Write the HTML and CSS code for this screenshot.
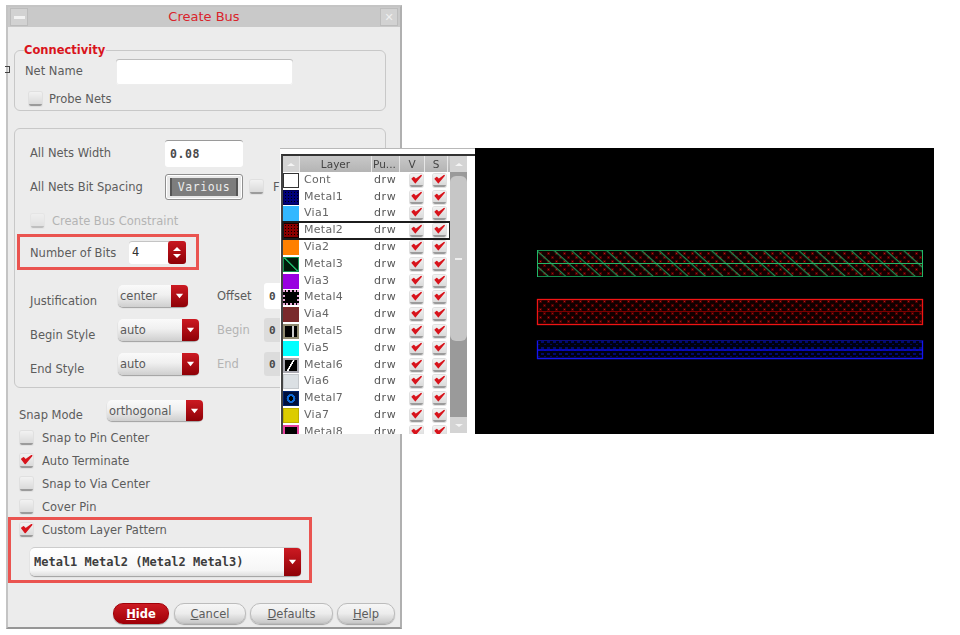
FILE: index.html
```html
<!DOCTYPE html>
<html lang="en">
<head>
<meta charset="utf-8">
<title>Create Bus</title>
<link rel="stylesheet" href="styles.css">
</head>
<body>
<svg class="defs" width="0" height="0" aria-hidden="true">
  <symbol id="tick" viewBox="0 0 14 14"><path d="M1.5 6 L5.5 11 L13 2 L6 7 L3.5 4.5 Z" fill="#d8141c" stroke="#d8141c" stroke-width="1.8" stroke-linejoin="round"/></symbol>
  <symbol id="down" viewBox="0 0 10 6"><path d="M1 0.5 H9 L5 5.5 Z" fill="#fff"/></symbol>
</svg>
<main class="stage">
  <section class="dialog">
    <header class="titlebar">
      <span class="tb-btn tb-menu"><i></i></span>
      <h1 class="title">Create Bus</h1>
      <span class="tb-btn tb-close">✕</span>
    </header>

    <div class="group group-conn">
      <div class="legend">Connectivity</div>
      <div class="row row-net">
        <label class="lbl lbl-net">Net Name</label>
        <span class="input input-net"></span>
      </div>
      <div class="row row-probe">
        <span class="cb"></span><span class="lbl">Probe Nets</span>
      </div>
    </div>

    <div class="group group-main">
      <div class="row row-width">
        <label class="lbl lbl-135 raised">All Nets Width</label>
        <span class="input input-78 mono">0.08</span>
      </div>
      <div class="row row-spacing">
        <label class="lbl lbl-135">All Nets Bit Spacing</label>
        <span class="input input-78 various"><b class="mono">Various</b></span>
        <span class="cb cb-spacing"></span><span class="lbl">F</span>
      </div>
      <div class="row row-constraint">
        <span class="cb cb-disabled"></span><span class="lbl disabled">Create Bus Constraint</span>
      </div>
      <div class="highlight bits">
        <label class="lbl lbl-bits">Number of Bits</label>
        <span class="input spin"><span class="spin-val mono">4</span><span class="spin-btn"><i class="up"></i><i class="dn"></i></span></span>
      </div>
      <div class="row row-just">
        <label class="lbl lbl-88 low">Justification</label>
        <span class="select sel-70"><span>center</span><span class="arrow"><svg><use href="#down"/></svg></span></span>
        <span class="lbl side side-offset">Offset</span>
        <span class="input small mono">0</span>
      </div>
      <div class="row row-style">
        <label class="lbl lbl-88 low">Begin Style</label>
        <span class="select sel-81"><span>auto</span><span class="arrow"><svg><use href="#down"/></svg></span></span>
        <span class="lbl side side-style disabled">Begin</span>
        <span class="input small off mono">0</span>
      </div>
      <div class="row row-style">
        <label class="lbl lbl-88 low">End Style</label>
        <span class="select sel-81"><span>auto</span><span class="arrow"><svg><use href="#down"/></svg></span></span>
        <span class="lbl side side-style disabled">End</span>
        <span class="input small off mono">0</span>
      </div>
    </div>

    <div class="row row-snap">
      <label class="lbl lbl-88 snap-lbl">Snap Mode</label>
      <span class="select sel-96"><span>orthogonal</span><span class="arrow"><svg><use href="#down"/></svg></span></span>
    </div>
    <div class="checks">
      <div class="check"><span class="cb"></span><span class="lbl">Snap to Pin Center</span></div>
      <div class="check"><span class="cb"><svg><use href="#tick"/></svg></span><span class="lbl">Auto Terminate</span></div>
      <div class="check"><span class="cb"></span><span class="lbl">Snap to Via Center</span></div>
      <div class="check"><span class="cb"></span><span class="lbl">Cover Pin</span></div>
    </div>
    <div class="highlight pattern">
      <div class="check"><span class="cb"><svg><use href="#tick"/></svg></span><span class="lbl">Custom Layer Pattern</span></div>
      <span class="select sel-pattern"><span class="mono dark">Metal1 Metal2 (Metal2 Metal3)</span><span class="arrow"><svg><use href="#down"/></svg></span></span>
    </div>
    <footer class="buttons">
      <button class="btn btn-hide"><u>H</u>ide</button>
      <button class="btn btn-cancel"><u>C</u>ancel</button>
      <button class="btn btn-defaults"><u>D</u>efaults</button>
      <button class="btn btn-help"><u>H</u>elp</button>
    </footer>
  </section>

  <span class="stray"></span>

  <section class="layers">
    <div class="layers-inner">
      <div class="table">
        <div class="thead">
          <span class="th th-corner"><i></i></span>
          <span class="th th-layer">Layer</span>
          <span class="th th-pu">Pu...</span>
          <span class="th th-v">V</span>
          <span class="th th-s">S</span>
        </div>
        <div class="tr"><span class="sw sw-cont"></span><span class="name">Cont</span><span class="pu">drw</span><span class="cb"><svg><use href="#tick"/></svg></span><span class="cb"><svg><use href="#tick"/></svg></span></div>
        <div class="tr"><span class="sw sw-m1"></span><span class="name">Metal1</span><span class="pu">drw</span><span class="cb"><svg><use href="#tick"/></svg></span><span class="cb"><svg><use href="#tick"/></svg></span></div>
        <div class="tr"><span class="sw sw-v1"></span><span class="name">Via1</span><span class="pu">drw</span><span class="cb"><svg><use href="#tick"/></svg></span><span class="cb"><svg><use href="#tick"/></svg></span></div>
        <div class="tr selected"><span class="sw sw-m2"></span><span class="name">Metal2</span><span class="pu">drw</span><span class="cb"><svg><use href="#tick"/></svg></span><span class="cb"><svg><use href="#tick"/></svg></span></div>
        <div class="tr"><span class="sw sw-v2"></span><span class="name">Via2</span><span class="pu">drw</span><span class="cb"><svg><use href="#tick"/></svg></span><span class="cb"><svg><use href="#tick"/></svg></span></div>
        <div class="tr"><span class="sw sw-m3"></span><span class="name">Metal3</span><span class="pu">drw</span><span class="cb"><svg><use href="#tick"/></svg></span><span class="cb"><svg><use href="#tick"/></svg></span></div>
        <div class="tr"><span class="sw sw-v3"></span><span class="name">Via3</span><span class="pu">drw</span><span class="cb"><svg><use href="#tick"/></svg></span><span class="cb"><svg><use href="#tick"/></svg></span></div>
        <div class="tr"><span class="sw sw-m4"></span><span class="name">Metal4</span><span class="pu">drw</span><span class="cb"><svg><use href="#tick"/></svg></span><span class="cb"><svg><use href="#tick"/></svg></span></div>
        <div class="tr"><span class="sw sw-v4"></span><span class="name">Via4</span><span class="pu">drw</span><span class="cb"><svg><use href="#tick"/></svg></span><span class="cb"><svg><use href="#tick"/></svg></span></div>
        <div class="tr"><span class="sw sw-m5"></span><span class="name">Metal5</span><span class="pu">drw</span><span class="cb"><svg><use href="#tick"/></svg></span><span class="cb"><svg><use href="#tick"/></svg></span></div>
        <div class="tr"><span class="sw sw-v5"></span><span class="name">Via5</span><span class="pu">drw</span><span class="cb"><svg><use href="#tick"/></svg></span><span class="cb"><svg><use href="#tick"/></svg></span></div>
        <div class="tr"><span class="sw sw-m6"></span><span class="name">Metal6</span><span class="pu">drw</span><span class="cb"><svg><use href="#tick"/></svg></span><span class="cb"><svg><use href="#tick"/></svg></span></div>
        <div class="tr"><span class="sw sw-v6"></span><span class="name">Via6</span><span class="pu">drw</span><span class="cb"><svg><use href="#tick"/></svg></span><span class="cb"><svg><use href="#tick"/></svg></span></div>
        <div class="tr"><span class="sw sw-m7"></span><span class="name">Metal7</span><span class="pu">drw</span><span class="cb"><svg><use href="#tick"/></svg></span><span class="cb"><svg><use href="#tick"/></svg></span></div>
        <div class="tr"><span class="sw sw-v7"></span><span class="name">Via7</span><span class="pu">drw</span><span class="cb"><svg><use href="#tick"/></svg></span><span class="cb"><svg><use href="#tick"/></svg></span></div>
        <div class="tr"><span class="sw sw-m8"></span><span class="name">Metal8</span><span class="pu">drw</span><span class="cb"><svg><use href="#tick"/></svg></span><span class="cb"><svg><use href="#tick"/></svg></span></div>
      </div>
      <div class="scrollbar">
        <span class="sb-btn"><i class="sb-up"></i></span>
        <span class="sb-thumb"><i></i></span>
        <span class="sb-track"></span>
        <span class="sb-btn"><i class="sb-dn"></i></span>
      </div>
    </div>
  </section>

  <section class="canvas">
    <svg width="459" height="286" viewBox="0 0 459 286">
      <defs>
        <pattern id="redfill" width="8" height="8" patternUnits="userSpaceOnUse">
          <rect width="8" height="8" fill="#120000"/>
          <rect x="0" y="0" width="3" height="3" fill="#4a0000"/>
          <rect x="4" y="4" width="3" height="3" fill="#4a0000"/>
          <rect x="1" y="1" width="1" height="1" fill="#c01414"/>
          <rect x="5" y="5" width="1" height="1" fill="#a01010"/>
        </pattern>
        <pattern id="bluefill" width="6" height="6" patternUnits="userSpaceOnUse">
          <rect width="6" height="6" fill="#000010"/>
          <rect x="0" y="1" width="3" height="2" fill="#000a70"/>
          <rect x="3" y="4" width="2" height="1" fill="#000a60"/>
        </pattern>
        <pattern id="hatch" width="20" height="11.6" patternUnits="userSpaceOnUse" patternTransform="translate(62 102) rotate(41.6)">
          <rect width="20" height="1.2" fill="#1e8a50"/>
        </pattern>
      </defs>
      <rect x="62.5" y="102.5" width="385" height="26" fill="url(#redfill)"/>
      <rect x="62.5" y="102.5" width="385" height="26" fill="url(#hatch)"/>
      <rect x="62.5" y="102.5" width="385" height="26" fill="none" stroke="#148a4c"/>
      <path d="M62.5 102 V129 M447.5 102 V129 M62 115.5 H448" stroke="#22b868" fill="none"/>

      <rect x="62.5" y="151.5" width="385" height="25" fill="url(#redfill)"/>
      <path d="M62 163.5 H448" stroke="#7a0000"/>
      <rect x="62.5" y="151.5" width="385" height="25" fill="none" stroke="#f01414" stroke-width="1.3"/>

      <rect x="62.5" y="192.5" width="385" height="18" fill="url(#bluefill)"/>
      <path d="M62 202 H448" stroke="#0a0ae8" stroke-width="1.6"/>
      <path d="M62.5 192 V211 M447.5 192 V211 M62 210.5 H448" stroke="#1414f0" fill="none" stroke-width="1.3"/>
      <path d="M62 192.5 H448" stroke="#0a0a80"/>
    </svg>
  </section>
</main>
</body>
</html>
```

FILE: styles.css
```css
* { box-sizing: border-box; }
html, body { margin: 0; padding: 0; background: #fff; }
body { width: 960px; height: 635px; overflow: hidden; }
.defs { display: block; }

.stage {
  position: relative;
  width: 960px;
  height: 635px;
  font-family: "DejaVu Sans", sans-serif;
  font-size: 11.5px;
  color: #5c5c5c;
  filter: blur(0.55px);
}

.mono { font-family: "DejaVu Sans Mono", monospace; font-weight: 700; }
.dark { color: #3c3c3c; }
.lbl { white-space: nowrap; }
.disabled { color: #b4b4b4; }
.raised { position: relative; top: -1px; }

/* dialog window */
.dialog {
  position: absolute;
  left: 6px;
  top: 5px;
  width: 396px;
  height: 624px;
  background: #ececec;
  border: 2px solid #c4c4c4;
  border-bottom-color: #969696;
  border-right-color: #b0b0b0;
}
.titlebar {
  display: flex;
  align-items: center;
  height: 20px;
  background: #c9c9c9;
  padding: 0 2px;
}
.tb-btn {
  display: flex;
  align-items: center;
  justify-content: center;
  width: 18px;
  height: 18px;
  background: #d2d2d2;
  border: 1px solid #bcbcbc;
  color: #efefef;
  font-size: 11px;
}
.tb-menu i { display: block; width: 11px; height: 3px; background: #f2f2f2; }
.title {
  flex: 1;
  margin: 0;
  padding-bottom: 2px;
  text-align: center;
  font-size: 13px;
  font-weight: 400;
  color: #d9232b;
}

/* groups */
.group {
  margin-left: 6px;
  width: 372px;
  border: 1px solid #c8c8c8;
  border-radius: 6px;
}
.group-conn { margin-top: 23px; height: 61px; }
.group-main { margin-top: 17px; height: 260px; padding: 11px 0 0 15px; }
.legend {
  width: fit-content;
  height: 14px;
  line-height: 14px;
  margin: -8px 0 0 9px;
  padding: 0 1px 0 0;
  background: #ececec;
  color: #d9141c;
  font-size: 11.5px;
  font-weight: 700;
}
.row { display: flex; align-items: center; }
.row-net { margin-top: 2px; height: 26px; padding-left: 10px; }
.lbl-net { width: 91px; position: relative; top: -1px; }
.row-probe { margin-top: 6px; height: 15px; padding-left: 14px; gap: 7px; }
.lbl-135 { width: 135px; }
.lbl-88 { width: 88px; }
.low { position: relative; top: 5px; }
.snap-lbl { position: relative; top: 4px; }
.row-width { height: 27px; }
.row-spacing { height: 26px; margin-top: 7px; }
.cb-spacing { margin: 0 10px 0 7px; }
.row-constraint { height: 14px; margin-top: 14px; padding-left: 1px; gap: 8px; }
.row-just { height: 22px; margin-top: 15px; }
.row-style { height: 22px; margin-top: 12px; }
.row-snap { height: 21px; margin: 12px 0 0 11px; }

/* inputs */
.input {
  display: flex;
  align-items: center;
  flex: none;
  background: #fff;
  border-radius: 3px;
  color: #4a4a4a;
}
.input-net {
  width: 177px;
  height: 26px;
  box-shadow: inset 0 1px 0 #bdbdbd, inset 0 0 0 1px #ededed;
}
.input-78 {
  width: 78px;
  height: 27px;
  padding-left: 5px;
  border-top: 1px solid #9a9a9a;
  letter-spacing: 0.6px;
  font-size: 11.5px;
}
.various {
  height: 26px;
  padding: 3px 4px;
  background: #e8e8e8;
  border: 1px solid #8e8e8e;
  box-shadow: inset 0 0 0 1px #fff;
}
.various b {
  flex: 1;
  height: 18px;
  line-height: 18px;
  text-align: center;
  background: #7d7d7d;
  border-left: 2px solid #555;
  border-right: 2px solid #555;
  color: #ececec;
  font-weight: 400;
  font-size: 11.5px;
}
.small {
  width: 24px;
  height: 26px;
  padding-left: 5px;
  font-size: 11px;
}
.off { background: #dcdcdc; height: 24px; }
.side { margin-left: 29px; width: 47px; }
.side-style { margin-left: 18px; }

/* spin */
.highlight { border: 3px solid #ea5450; }
.bits {
  display: flex;
  align-items: center;
  width: 182px;
  height: 36px;
  margin: 6px 0 0 -13px;
  padding-left: 10px;
}
.lbl-bits { width: 99px; position: relative; top: 1px; }
.spin {
  width: 57px;
  height: 23px;
  justify-content: space-between;
  box-shadow: inset 0 1px 0 #c4c4c4;
}
.spin-val { padding-left: 3px; font-weight: 400; font-size: 12px; color: #333; }
.spin-btn {
  display: flex;
  flex-direction: column;
  align-items: center;
  justify-content: center;
  gap: 3px;
  width: 18px;
  height: 23px;
  background: linear-gradient(#c81820, #8e0006);
  border-radius: 3px;
}
.spin-btn i { width: 0; height: 0; border-left: 4px solid transparent; border-right: 4px solid transparent; }
.spin-btn .up { border-bottom: 4px solid #fff; }
.spin-btn .dn { border-top: 4px solid #fff; }

/* select */
.select {
  display: flex;
  align-items: center;
  justify-content: space-between;
  flex: none;
  height: 22px;
  padding-left: 2px;
  border-radius: 5px;
  background: linear-gradient(#fafafa, #f0f0f0 45%, #cfcfcf);
  box-shadow: 0 1px 1px #a0a0a0;
  color: #5a5a5a;
}
.sel-70 { width: 70px; }
.sel-81 { width: 81px; }
.sel-96 { width: 96px; height: 21px; }
.arrow {
  display: flex;
  align-items: center;
  justify-content: center;
  flex: none;
  width: 17px;
  height: 100%;
  background: linear-gradient(#cc1a22, #8e0006);
  border-radius: 0 4px 4px 0;
}
.arrow svg { width: 9px; height: 6px; }
.sel-pattern {
  display: flex;
  width: 271px;
  height: 29px;
  margin: 10px 0 0 10px;
  padding-left: 4px;
  background: linear-gradient(#fff, #f6f6f6 80%, #dedede);
  border-top: 1px solid #ccc;
  font-size: 12px;
}

/* check boxes */
.cb {
  display: block;
  flex: none;
  width: 13px;
  height: 14px;
  border-radius: 2px;
  background: linear-gradient(#f2f2f2, #dadada);
  border-bottom: 2px solid #9b9b9b;
  box-shadow: 0 0 0 1px #e0e0e0;
}
.cb svg { display: block; width: 13px; height: 12px; }
.cb-disabled { opacity: 0.55; }
.checks { margin: 10px 0 0 12px; display: flex; flex-direction: column; gap: 9px; }
.check { display: flex; align-items: center; gap: 9px; height: 14px; }
.pattern {
  width: 304px;
  height: 66px;
  margin-top: 3px;
  padding: 3px 0 0 9px;
}

/* buttons */
.buttons {
  display: flex;
  gap: 4px;
  margin: 20px 0 0 105px;
}
.btn {
  height: 21px;
  padding: 0;
  border: 1px solid #bcbcbc;
  border-radius: 10px;
  background: linear-gradient(#f6f6f6, #ececec 50%, #c8c8c8);
  box-shadow: 0 1px 1px #a4a4a4;
  color: #5c5c5c;
  font: inherit;
}
.btn-hide {
  width: 56px;
  margin-right: 1px;
  background: linear-gradient(#cc1a22, #a00008);
  border-color: #a00008;
  color: #fff;
  font-weight: 700;
}
.btn-cancel { width: 72px; }
.btn-defaults { width: 83px; }
.btn-help { width: 58px; }

.stray {
  position: absolute;
  left: 5px;
  top: 66px;
  width: 5px;
  height: 7px;
  border: 1px solid #444;
  border-left: 0;
}

/* layer palette */
.layers {
  position: absolute;
  left: 280px;
  top: 148px;
  width: 195px;
  height: 286px;
  background: #fff;
  border-top: 1px solid #b8b8b8;
  overflow: hidden;
}
.layers-inner {
  display: flex;
  margin: 5px 0 0 1px;
  height: 290px;
  border-top: 2px solid #333;
  border-left: 2px solid #444;
}
.table { width: 167px; flex: none; }
.thead {
  display: grid;
  grid-template-columns: 17px 72px 28px 25px 23px;
  height: 16px;
  background: linear-gradient(#c8c8c8, #b4b4b4);
  color: #444;
  font-size: 10.5px;
  line-height: 16px;
  text-align: center;
}
.th { border-right: 1px solid #e6e6e6; }
.th-corner { display: flex; align-items: center; justify-content: center; background: #d4d4d4; }
.th-corner i, .sb-up {
  width: 0; height: 0;
  border-left: 4px solid transparent;
  border-right: 4px solid transparent;
  border-bottom: 3px solid #f4f4f4;
}
.th-pu { text-align: left; padding-left: 1px; }
.tr {
  display: grid;
  grid-template-columns: 16px 75px 31px 23px 13px;
  align-items: center;
  height: 16.8px;
  font-size: 11px;
  color: #666;
  letter-spacing: 0.3px;
}
.tr .cb { width: 13px; height: 13px; margin-left: 5px; }
.tr .cb svg { height: 11px; }
.name { padding: 0 0 2px 5px; }
.pu { color: #555; letter-spacing: 0.6px; padding-bottom: 2px; }
.selected { outline: 2px solid #1c1c1c; outline-offset: -1px; background: #fff; }

.sw { display: block; width: 16px; height: 15px; }
.sw-cont { background: #fff; border: 1px solid #333; }
.sw-m1 { background: radial-gradient(#000 40%, transparent 45%) 0 0 / 3px 3px, #00007a; border: 1px solid #000050; }
.sw-v1 { background: #33b8ff; }
.sw-m2 { background: radial-gradient(#000 40%, transparent 45%) 0 0 / 3px 3px, #8a0000; border: 1px solid #160000; }
.sw-v2 { background: #ff8000; }
.sw-m3 { background: linear-gradient(45deg, #001a0a 46%, #1aa860 48%, #1aa860 54%, #001a0a 56%); border: 1px solid #139050; }
.sw-v3 { background: #9900e0; }
.sw-m4 { background: #000; border: 2px dotted #e8a8d8; }
.sw-v4 { background: #7a2a2c; }
.sw-m5 { background: linear-gradient(90deg, #000 60%, #ccc 60%, #ccc 72%, #000 72%); border: 2px solid #8f8a70; }
.sw-v5 { background: #00ffff; }
.sw-m6 { background: linear-gradient(-60deg, #000 46%, #fff 48%, #fff 56%, #000 58%); border: 2px solid #a8a8b0; }
.sw-v6 { background: #dbe0e4; border: 1px solid #c4c8cc; }
.sw-m7 { background: radial-gradient(circle, #000 22%, #0f6ad8 26%, #0f6ad8 44%, #00103c 48%); border: 1px solid #00206a; }
.sw-v7 { background: #dccc00; border: 1px solid #bcae00; }
.sw-m8 { background: #000; border: 2px solid #e8409c; }

.scrollbar {
  display: flex;
  flex-direction: column;
  width: 17px;
  flex: none;
  background: #9a9a9a;
  height: 277px;
}
.sb-btn {
  display: flex;
  align-items: center;
  justify-content: center;
  flex: none;
  height: 16px;
  background: #d4d4d4;
}
.sb-dn {
  width: 0; height: 0;
  border-left: 4px solid transparent;
  border-right: 4px solid transparent;
  border-top: 3px solid #f4f4f4;
}
.sb-thumb {
  display: flex;
  align-items: center;
  justify-content: center;
  flex: none;
  height: 165px;
  margin-top: 4px;
  background: #c6c6c6;
  border-radius: 6px;
}
.sb-thumb i { width: 7px; height: 2px; background: #eee; }
.sb-track { flex: 1; }

/* layout canvas */
.canvas {
  position: absolute;
  left: 475px;
  top: 148px;
  width: 459px;
  height: 286px;
  background: #000;
}
.canvas svg { display: block; }
```
